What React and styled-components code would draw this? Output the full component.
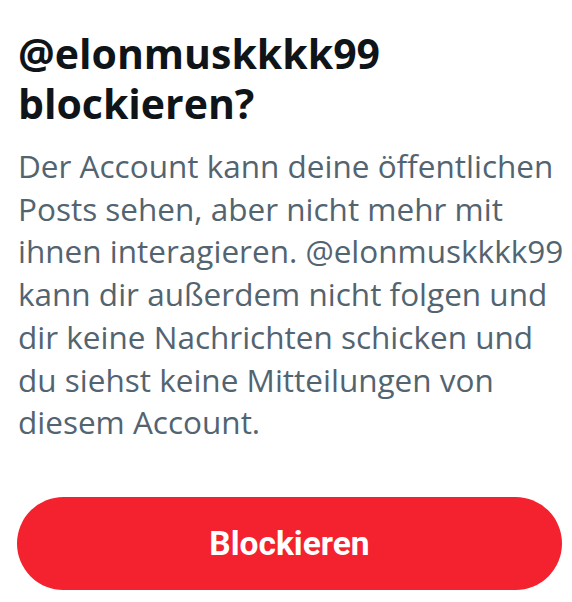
import React from "react";
import styled, { createGlobalStyle } from "styled-components";

const Global = createGlobalStyle`
  html, body { margin: 0; padding: 0; background: #ffffff; }
  body { font-family: "Segoe UI", "Open Sans", "Noto Sans", sans-serif; }
`;

const Dialog = styled.div`
  width: 572px;
  height: 602px;
  box-sizing: border-box;
  padding: 28px 10px 12px 17px;
  display: flex;
  flex-direction: column;
`;

const Title = styled.h1`
  margin: 0 0 0 1px;
  font-size: 41px;
  line-height: 50px;
  font-weight: 700;
  color: #0f1419;
`;

const Body = styled.p`
  margin: 17px 0 0 1px;
  font-size: 31.5px;
  line-height: 42.7px;
  font-weight: 400;
  color: #536471;
  white-space: nowrap;
`;

const DangerButton = styled.button`
  margin-top: auto;
  height: 93px;
  width: 100%;
  border: none;
  border-radius: 47px;
  background: #f4212e;
  color: #ffffff;
  font-family: Roboto, "Noto Sans", sans-serif;
  font-size: 33.5px;
  font-weight: 700;
  cursor: pointer;
`;

export default function App() {
  return (
    <>
      <Global />
      <Dialog>
        <Title>
          @elonmuskkkk99
          <br />
          blockieren?
        </Title>
        <Body>
          Der Account kann deine öffentlichen
          <br />
          Posts sehen, aber nicht mehr mit
          <br />
          ihnen interagieren. @elonmuskkkk99
          <br />
          kann dir außerdem nicht folgen und
          <br />
          dir keine Nachrichten schicken und
          <br />
          du siehst keine Mitteilungen von
          <br />
          diesem Account.
        </Body>
        <DangerButton>Blockieren</DangerButton>
      </Dialog>
    </>
  );
}
